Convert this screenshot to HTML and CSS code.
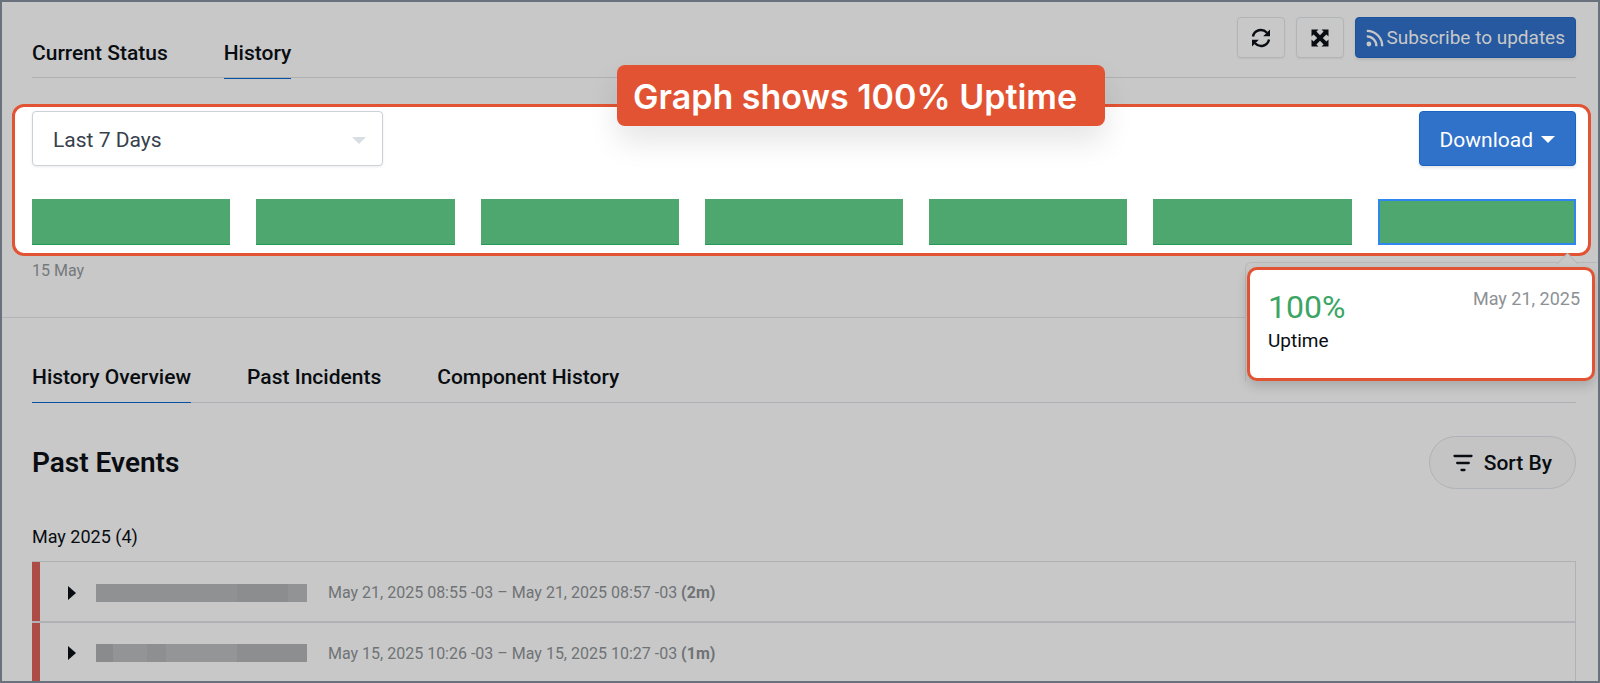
FILE: index.html
```
<!DOCTYPE html>
<html lang="en">
<head>
  <meta charset="utf-8">
  <title>Status History</title>
  <link rel="stylesheet" href="styles.css">
</head>
<body>
  <header class="top-bar">
    <nav class="tabs">
      <a class="tab" href="#status">Current Status</a>
      <a class="tab active" href="#history">History</a>
    </nav>
    <div class="actions">
      <button class="icon-button" aria-label="Refresh">
        <svg width="20" height="20" viewBox="0 0 20 20">
          <path d="M2 8.5 C3.4 1.6 11.5 0 16 4.8 M18 11.5 C16.6 18.4 8.5 20 4 15.2" fill="none" stroke="#090d11" stroke-width="2.4"/>
          <path d="M19 1.5 V8.3 H12.2 Z M1 18.5 V11.7 H7.8 Z" fill="#090d11"/>
        </svg>
      </button>
      <button class="icon-button" aria-label="Full screen">
        <svg width="18" height="18" viewBox="0 0 18 18" fill="#090d11">
          <path d="M.5.5H7.5L5.4 2.6 9 6.2 12.6 2.6 10.5.5H17.5V7.5L15.4 5.4 11.8 9 15.4 12.6 17.5 10.5V17.5H10.5L12.6 15.4 9 11.8 5.4 15.4 7.5 17.5H.5V10.5L2.6 12.6 6.2 9 2.6 5.4.5 7.5Z"/>
        </svg>
      </button>
      <button class="subscribe">
        <svg width="18" height="18" viewBox="0 0 18 18" fill="none" stroke="#c8c8c8" stroke-width="2.3">
          <circle cx="2.9" cy="15" r="2.4" fill="#c8c8c8" stroke="none"/>
          <path d="M.8 7.4 A9.6 9.6 0 0 1 10.4 17.2 M.8 1.8 A15.2 15.2 0 0 1 16.2 17.2"/>
        </svg>
        Subscribe to updates
      </button>
    </div>
  </header>

  <main>
    <section class="uptime">
      <div class="graph">
        <div class="callout">Graph shows 100% Uptime</div>
        <div class="graph-controls">
          <div class="range">
            <select aria-label="Date range">
              <option>Last 7 Days</option>
            </select>
          </div>
          <button class="download">Download <span class="caret"></span></button>
        </div>
        <div class="days">
          <div class="day"></div>
          <div class="day"></div>
          <div class="day"></div>
          <div class="day"></div>
          <div class="day"></div>
          <div class="day"></div>
          <div class="day selected"></div>
        </div>
        <!-- tooltip for the selected day -->
        <div class="popover">
          <div class="popover-card">
            <div>
              <div class="percent">100%</div>
              <div class="percent-label">Uptime</div>
            </div>
            <div class="popover-date">May 21, 2025</div>
          </div>
        </div>
      </div>
      <div class="first-day">15 May</div>
    </section>

    <nav class="tabs sub-tabs">
      <a class="tab active" href="#overview">History Overview</a>
      <a class="tab" href="#incidents">Past Incidents</a>
      <a class="tab" href="#components">Component History</a>
    </nav>

    <section class="events">
      <div class="events-head">
        <h2>Past Events</h2>
        <button class="sort">
          <svg width="20" height="18" viewBox="0 0 20 18" stroke="#090d11" stroke-width="2.3" stroke-linecap="round">
            <path d="M1.5 2H18.5M4.2 9H15.8M8.5 16H11.5"/>
          </svg>
          Sort By
        </button>
      </div>
      <h3>May 2025 (4)</h3>
      <ul class="event-list">
        <li class="event">
          <button class="expand" aria-label="Expand"></button>
          <span class="redacted"></span>
          <span class="time">May 21, 2025 08:55 -03 – May 21, 2025 08:57 -03 <b>(2m)</b></span>
        </li>
        <li class="event">
          <button class="expand" aria-label="Expand"></button>
          <span class="redacted second"></span>
          <span class="time">May 15, 2025 10:26 -03 – May 15, 2025 10:27 -03 <b>(1m)</b></span>
        </li>
      </ul>
    </section>
  </main>
</body>
</html>
```
FILE: styles.css
```
* {
  box-sizing: border-box;
}

body {
  margin: 0;
  min-height: 100vh;
  border: 2px solid #68717c;
  background-color: #c8c8c8;
  color: #090d11;
  font-family: Roboto, "Liberation Sans", sans-serif;
}

button, select {
  font-family: inherit;
  cursor: pointer;
}

h2, h3, ul {
  margin: 0;
  padding: 0;
}

/* header */
.top-bar {
  display: flex;
  justify-content: space-between;
  align-items: flex-end;
  height: 76px;
  margin: 0 22px 0 30px;
  border-bottom: 1px solid #aeb0b2;
}

.tabs {
  display: flex;
  gap: 56px;
}

.tab {
  padding-bottom: 12px;
  border-bottom: 1px solid transparent;
  margin-bottom: -2px;
  color: #090d11;
  font-size: 21px;
  font-weight: 500;
  line-height: 26px;
  text-decoration: none;
}

.tab.active {
  border-bottom-color: #0450a4;
}

.actions {
  display: flex;
  align-self: flex-start;
  gap: 11px;
  margin-top: 15px;
}

.icon-button {
  display: flex;
  align-items: center;
  justify-content: center;
  width: 48px;
  height: 41px;
  padding: 0;
  border: 1px solid #b2b5b8;
  border-radius: 4px;
  background: none;
  box-shadow: 0 1px 2px rgba(0, 0, 0, 0.06);
}

.subscribe {
  display: flex;
  align-items: center;
  gap: 2px;
  height: 41px;
  padding: 0 10px;
  border: 1px solid #1d539b;
  border-radius: 4px;
  background-color: #26599f;
  color: #c8c8c8;
  font-size: 19px;
  box-shadow: 0 2px 3px rgba(0, 0, 0, 0.08);
}

/* uptime graph */
.uptime {
  padding: 26px 7px 36px 10px;
  border-bottom: 1px solid #b4b5b7;
}

.graph {
  position: relative;
  padding: 4px 12px 8px 17px;
  border: 3px solid #e25333;
  border-radius: 12px;
  background-color: #fff;
}

.callout {
  position: absolute;
  top: -42px;
  left: 602px;
  padding: 2px 28px 0 16px;
  border-radius: 8px;
  background-color: #e25333;
  color: #fff;
  font-family: Inter, "Liberation Sans", sans-serif;
  font-size: 34px;
  font-weight: 600;
  line-height: 59px;
  white-space: nowrap;
  box-shadow: 0 16px 30px rgba(0, 0, 0, 0.1);
}

.graph-controls {
  display: flex;
  justify-content: space-between;
}

.range {
  position: relative;
  width: 351px;
}

.range select {
  width: 100%;
  height: 55px;
  padding: 2px 20px 0;
  border: 1px solid #cbd1d7;
  border-radius: 4px;
  appearance: none;
  background-color: #fff;
  color: #36414c;
  font-size: 21px;
  box-shadow: 0 1px 3px rgba(0, 0, 0, 0.08);
}

.range::after {
  content: "";
  position: absolute;
  top: 26px;
  right: 17px;
  border: 7px solid transparent;
  border-top-color: #d8dee3;
  border-bottom: 0;
  pointer-events: none;
}

.download {
  display: flex;
  align-items: center;
  gap: 8px;
  height: 55px;
  padding: 2px 20px 0;
  border: 1px solid #1965c5;
  border-radius: 4px;
  background-color: #3071c9;
  color: #fff;
  font-size: 21px;
  box-shadow: 0 2px 3px rgba(0, 0, 0, 0.1);
}

.caret {
  border: 7px solid transparent;
  border-top-color: #fff;
  border-bottom: 0;
}

.days {
  display: grid;
  grid-template-columns: repeat(7, 1fr);
  gap: 26px;
  margin-top: 33px;
}

.day {
  height: 46px;
  background-color: #4ea76e;
  border-bottom: 1px solid #239a56;
}

.day.selected {
  border: 2px solid #2f86ee;
}

.popover {
  position: absolute;
  top: 155px;
  right: -10px;
  width: 353px;
  padding: 4px 3px 0 1px;
  border: 1px solid #b7b8ba;
  border-right: 0;
  border-bottom: 0;
  border-radius: 6px 0 0 0;
  background-color: #c8c8c8;
}

.popover::before {
  content: "";
  position: absolute;
  top: -7px;
  right: 23px;
  width: 14px;
  height: 14px;
  border: 1px solid #b7b8ba;
  border-right: 0;
  border-bottom: 0;
  background-color: #c8c8c8;
  transform: rotate(45deg);
}

.popover-card {
  position: relative;
  display: flex;
  justify-content: space-between;
  height: 114px;
  padding: 18px 12px 0 18px;
  border: 3px solid #e25333;
  border-radius: 10px;
  background-color: #fff;
  box-shadow: 0 5px 12px rgba(0, 0, 0, 0.16);
}

.percent {
  color: #3da564;
  font-size: 32px;
  line-height: 38px;
}

.percent-label {
  font-size: 19px;
  line-height: 30px;
}

.popover-date {
  color: #8d9195;
  font-size: 18px;
  line-height: 22px;
}

.first-day {
  margin: 5px 20px 0;
  color: #75797c;
  font-size: 16px;
  line-height: 20px;
}

/* history section */
.sub-tabs {
  margin: 0 22px 0 30px;
  padding-top: 46px;
  border-bottom: 1px solid #adb0b5;
}

.sub-tabs .tab {
  margin-bottom: -1px;
}

.events {
  padding: 33px 22px 0 30px;
}

.events-head {
  display: flex;
  justify-content: space-between;
  align-items: center;
}

.events-head h2 {
  font-size: 28px;
  font-weight: 600;
}

.sort {
  display: flex;
  align-items: center;
  gap: 11px;
  height: 53px;
  padding: 0 23px;
  border: 1px solid #afb2b6;
  border-radius: 27px;
  background-color: #c4c4c4;
  color: #090d11;
  font-size: 21px;
  font-weight: 500;
}

.events h3 {
  margin-top: 36px;
  font-size: 18px;
  font-weight: 400;
  line-height: 24px;
}

.event-list {
  margin-top: 12px;
  border-top: 1px solid #afb1b5;
  border-right: 1px solid #afb1b5;
  list-style: none;
}

.event {
  display: flex;
  align-items: center;
  height: 61px;
  padding-top: 2px;
  border-bottom: 2px solid #b0b2b8;
}

.event::before {
  content: "";
  align-self: stretch;
  width: 8px;
  margin-top: -2px;
  background-color: #ad4b47;
}

.event:last-child {
  height: 58px;
  border-bottom: 0;
}

.expand {
  width: 8px;
  height: 14px;
  margin: 0 20px 0 28px;
  padding: 0;
  border: 7px solid transparent;
  border-right: 0;
  border-left: 8px solid #090d11;
  background: none;
}

.redacted {
  width: 211px;
  height: 18px;
  background: linear-gradient(to right, #909192 0 67%, #8c8d8e 67% 91%, #929394 91%);
}

.redacted.second {
  background: linear-gradient(to right, #8a8b8c 0 8%, #939495 8% 24%, #8e8f90 24% 33%, #949596 33% 67%, #8d8e8f 67%);
}

.time {
  margin-left: 21px;
  color: #6f7376;
  font-size: 16px;
}
```
